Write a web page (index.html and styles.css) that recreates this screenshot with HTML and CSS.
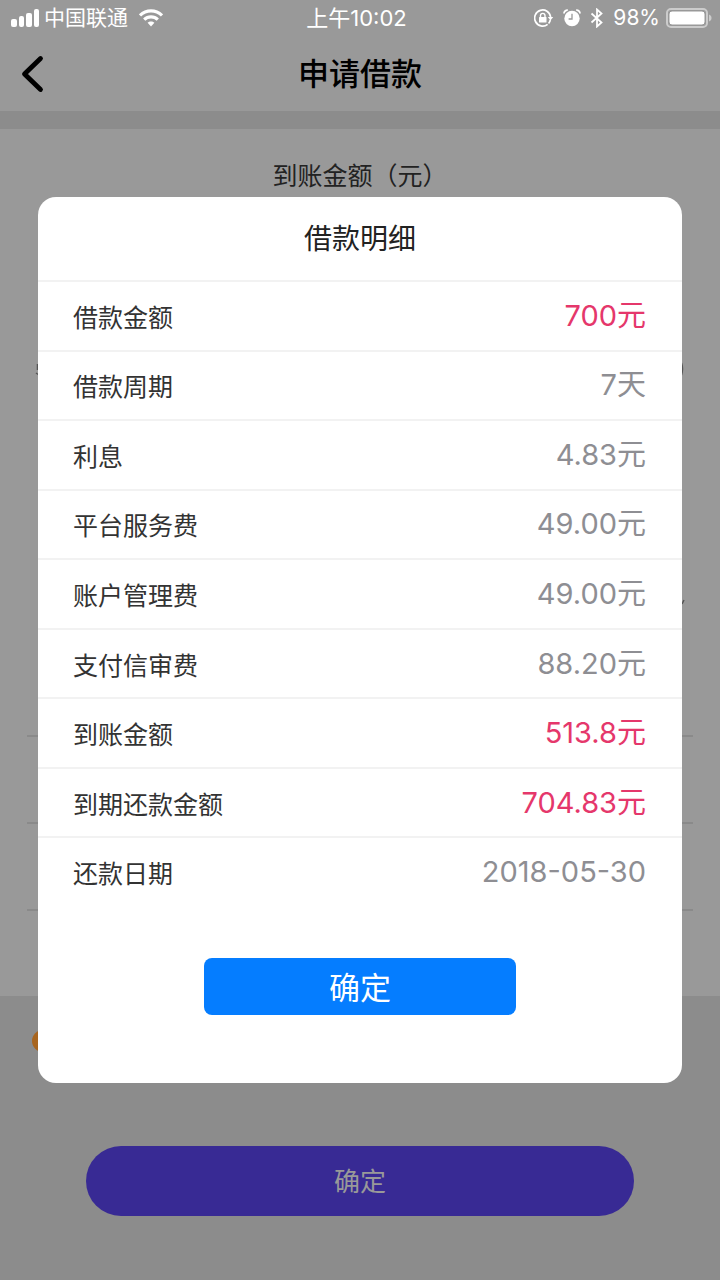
FILE: index.html
```html
<!DOCTYPE html>
<html lang="zh-CN">
<head>
<meta charset="utf-8">
<meta name="viewport" content="width=device-width, initial-scale=1">
<title>申请借款</title>
<link rel="stylesheet" href="styles.css">
</head>
<body>
<div class="page">
  <div class="status">
    <div class="status-left">
      <svg width="29" height="18" viewBox="0 0 29 18" fill="#fff" aria-hidden="true">
        <rect x="0" y="10" width="6" height="8" rx="2"/><rect x="8" y="7" width="5" height="11" rx="2"/><rect x="15" y="4" width="6" height="14" rx="2"/><rect x="23" y="0" width="5" height="18" rx="2"/>
      </svg>
      <span class="carrier">中国联通</span>
      <svg class="wifi" width="24" height="18" viewBox="0 0 24 18" fill="none" stroke="#fff" stroke-width="3.2" aria-hidden="true">
        <path d="M1 6.4C7.200 .3 16.800 .3 23 6.400"/><path d="M5.200 10.700c3.800-3.700 9.800-3.700 13.600 0"/><path d="M12 17.500l-3.400-3.700c1.900-1.800 4.900-1.800 6.800 0z" fill="#fff" stroke="none"/>
      </svg>
    </div>
    <div class="clock">上午10:02</div>
    <div class="status-right">
      <svg width="20" height="18" viewBox="0 0 20 18" fill="none" stroke="#fff" stroke-width="1.700" aria-hidden="true">
        <path d="M13.600 15.300A8 8 0 1 1 16.600 8"/><path d="M13.800 8h5.400l-2.700 3.600z" fill="#fff" stroke="none"/><path d="M16.300 11a8 8 0 0 1-1.700 3.500"/><rect x="5" y="8" width="7.500" height="5.500" rx=".6" fill="#fff" stroke="none"/><path d="M6.500 8.500V6.600a2.250 2.250 0 0 1 4.500 0v1.900" stroke-width="1.400"/>
      </svg>
      <svg class="alarm" width="18" height="18" viewBox="0 0 18 18" aria-hidden="true">
        <circle cx="9" cy="9.500" r="7.700" fill="#fff"/><path d="M9 4.800v5.200H5.600" fill="none" stroke="#999" stroke-width="1.300"/><path d="M1 4.500C1 2.500 2.800 1 4.800 1.200M17 4.500C17 2.500 15.200 1 13.200 1.200" fill="none" stroke="#fff" stroke-width="1.800"/>
      </svg>
      <svg width="14" height="20" viewBox="0 0 14 20" fill="none" stroke="#fff" stroke-width="1.800" aria-hidden="true">
        <path d="M1.500 5.500l10 9L7 18.500v-17l4.500 4-10 9"/>
      </svg>
      <span class="percent">98%</span>
      <svg width="46" height="20" viewBox="0 0 46 20" aria-hidden="true">
        <rect x="1" y="1" width="40" height="18" rx="4" fill="none" stroke="#ccc" stroke-width="2"/><rect x="3" y="3" width="36" height="14" rx="3" fill="#fff" stroke="#999"/><path d="M43 6.500c2 .8 2.500 2 2.500 3.500s-.5 2.700-2.500 3.500z" fill="#ccc"/>
      </svg>
    </div>
  </div>
  <header class="header">
    <button class="back" aria-label="返回">
      <svg width="24" height="38" viewBox="0 0 24 38" fill="none" stroke="#000" stroke-width="4.800" stroke-linecap="round" stroke-linejoin="round" aria-hidden="true"><path d="M20.500 3.500L4.500 19l16 15.500"/></svg>
    </button>
    <h1 class="heading">申请借款</h1>
  </header>
  <main class="form">
    <div class="amount-label">到账金额（元）</div>
    <svg class="slider-ends" height="260" width="100%" aria-hidden="true">
      <path d="M37.500 3v6M36 12l3 2" stroke="#555" stroke-width="1.500"/>
      <svg x="100%" overflow="visible"><path d="M-38.500 2q2 6 0 12M-38 243l2-4" stroke="#555" stroke-width="1.500" fill="none"/></svg>
    </svg>
    <div class="lines"><div class="line"></div><div class="line"></div><div class="line"></div></div>
  </main>
  <div class="notice"><span class="notice-dot"></span></div>
  <button class="apply">确定</button>
</div>
<div class="overlay">
  <section class="dialog" role="dialog" aria-labelledby="detail-title">
    <h2 class="dialog-title" id="detail-title">借款明细</h2>
    <dl class="details">
      <div class="row"><dt>借款金额</dt><dd class="accent">700元</dd></div>
      <div class="row"><dt>借款周期</dt><dd>7天</dd></div>
      <div class="row"><dt>利息</dt><dd>4.83元</dd></div>
      <div class="row"><dt>平台服务费</dt><dd>49.00元</dd></div>
      <div class="row"><dt>账户管理费</dt><dd>49.00元</dd></div>
      <div class="row"><dt>支付信审费</dt><dd>88.20元</dd></div>
      <div class="row"><dt>到账金额</dt><dd class="accent">513.8元</dd></div>
      <div class="row"><dt>到期还款金额</dt><dd class="accent">704.83元</dd></div>
      <div class="row"><dt>还款日期</dt><dd>2018-05-30</dd></div>
    </dl>
    <button class="confirm">确定</button>
  </section>
</div>
</body>
</html>
```
FILE: styles.css
```css
* { box-sizing: border-box; margin: 0; }
body {
  background: #8c8c8c;
  color: #222;
  font-family: Inter, "Noto Sans CJK SC", sans-serif;
  position: relative;
}
button { border: 0; padding: 0; font-family: inherit; }
svg { display: block; flex: none; }
.page { min-height: 100vh; display: flex; flex-direction: column; }

.status {
  display: grid;
  grid-template-columns: 1fr auto 1fr;
  align-items: center;
  height: 36px;
  padding: 0 8px 0 11px;
  background: #999;
  color: #fff;
  line-height: 36px;
}
.status-left, .status-right { display: flex; align-items: center; }
.status-right { justify-content: flex-end; gap: 9px; }
.carrier { margin: 0 11px 0 4px; font-size: 21px; }
.clock { margin-right: 10px; font-size: 22px; }
.percent { font-size: 21px; margin-right: -3px; }

.header {
  display: grid;
  grid-template-columns: 48px 1fr 48px;
  align-items: center;
  height: 75px;
  padding: 0 20px;
  background: #999;
}
.back { width: 48px; background: none; }
.heading { text-align: center; color: #000; font-size: 31px; font-weight: 500; line-height: 46px; }

.form { margin-top: 18px; padding-top: 28px; background: #999; }
.amount-label { text-align: center; font-size: 25px; line-height: 38px; }
.slider-ends { margin-top: 166px; }
.lines { padding: 114px 27px 0; }
.line { height: 87px; border-top: 2px solid #8a8a8a; }
.notice { height: 88px; padding: 34px 32px; margin-bottom: 62px; }
.notice-dot { display: block; width: 22px; height: 22px; border-radius: 50%; background: #a8651f; }
.apply {
  width: 76%;
  height: 70px;
  margin: 0 auto 64px;
  padding-bottom: 3px;
  border-radius: 35px;
  background: #382a94;
  color: #999;
  font-size: 26px;
}

.overlay { position: absolute; top: 0; left: 0; width: 100%; padding: 197px 38px 0; }
.dialog {
  padding-bottom: 68px;
  border-radius: 18px;
  background: #fff;
}
.dialog-title { height: 83px; text-align: center; font-size: 28px; font-weight: 400; line-height: 84px; }
.details { display: grid; grid-auto-rows: 1fr; height: 626px; }
.row {
  display: flex;
  align-items: center;
  justify-content: space-between;
  padding: 0 36px 0 35px;
  border-top: 2px solid #f2f2f2;
}
.row dt { font-size: 25px; line-height: 38px; padding-top: 4px; color: #333; }
.row dd { font-size: 29px; line-height: 42px; color: #8e8e93; }
.row .accent { color: #e5376b; }
.confirm {
  display: block;
  width: 312px;
  max-width: 80%;
  height: 57px;
  margin: 52px auto 0;
  padding-bottom: 3px;
  border-radius: 8px;
  background: #057dff;
  color: #fff;
  font-size: 31px;
}
```
